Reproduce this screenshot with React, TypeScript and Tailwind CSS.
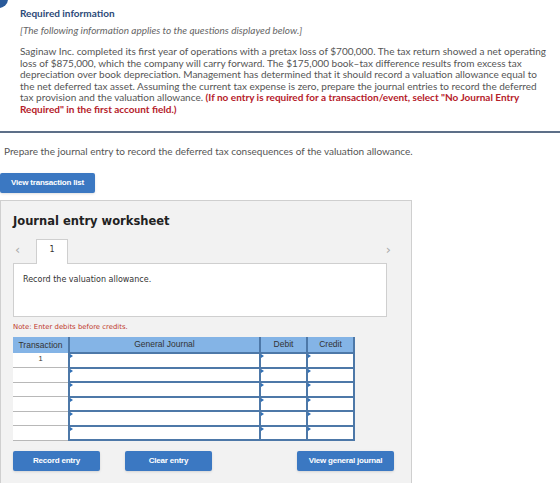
import React from "react";

const rows = [1, 2, 3, 4, 5, 6];

const Caret = () => (
  <span className="absolute left-0 top-0 h-0 w-0 border-y-[2.5px] border-l-[3px] border-y-transparent border-l-[#2f6fb5]" />
);

const BlueButton: React.FC<{ label: string; className?: string }> = ({ label, className }) => (
  <button
    type="button"
    className={`h-[20px] rounded-[2px] bg-[#3b78c2] text-[8px] font-bold tracking-[-0.2px] text-white shadow-sm ${className ?? ""}`}
    style={{ fontFamily: "'Liberation Sans', Arial, sans-serif" }}
  >
    {label}
  </button>
);

export default function App() {
  return (
    <div className="relative h-[483px] w-[560px] overflow-hidden bg-white" style={{ fontFamily: "Lato, 'Open Sans', sans-serif" }}>
      <div className="absolute -left-[10px] -top-[10px] h-[18px] w-[18px] rounded-full bg-[#2a5a9a]" />

      <section className="border-b-2 border-[#5d6f88] px-[20px] pb-[16px] pt-[7px]">
        <h2 className="text-[10px] font-bold leading-[12px] text-[#2c4a78]">Required information</h2>
        <p className="mt-[5px] text-[10px] italic leading-[12px] text-[#666]">
          [The following information applies to the questions displayed below.]
        </p>
        <p className="mt-[10px] whitespace-nowrap text-[10px] leading-[11.5px] text-[#555]">
          Saginaw Inc. completed its first year of operations with a pretax loss of $700,000. The tax return showed a net operating
          <br />
          loss of $875,000, which the company will carry forward. The $175,000 book–tax difference results from excess tax
          <br />
          depreciation over book depreciation. Management has determined that it should record a valuation allowance equal to
          <br />
          the net deferred tax asset. Assuming the current tax expense is zero, prepare the journal entries to record the deferred
          <br />
          tax provision and the valuation allowance.{" "}
          <span className="font-bold text-[#b5202a]">
            (If no entry is required for a transaction/event, select "No Journal Entry
            <br />
            Required" in the first account field.)
          </span>
        </p>
      </section>

      <p className="mt-[12px] pl-[4px] text-[10px] leading-[12px] text-[#555]">
        Prepare the journal entry to record the deferred tax consequences of the valuation allowance.
      </p>

      <BlueButton label="View transaction list" className="mt-[16px] w-[95px]" />

      <div
        className="mt-[7px] w-[412px] border border-[#cfcfcf] bg-[#f2f2f2] pb-[20px]"
        style={{ fontFamily: "'DejaVu Sans', Verdana, sans-serif" }}
      >
        <h3 className="ml-[12px] mt-[12px] text-[11.5px] font-bold leading-[16px] text-[#222]">Journal entry worksheet</h3>

        <div className="relative ml-[12px] mr-[24px] mt-[9px]">
          <div className="flex h-[25px] items-end">
            <span className="mb-[7px] ml-[2px] w-[21px] text-[13px] leading-none text-[#aaa]">‹</span>
            <div className="relative z-10 -mb-px flex h-[25px] w-[32px] justify-center border border-b-0 border-[#cfcfcf] bg-white pt-[4px] text-[8px] text-[#333]">
              1
            </div>
            <span className="mb-[7px] ml-auto mr-[-4px] text-[13px] leading-none text-[#aaa]">›</span>
          </div>
          <div className="h-[54px] border border-[#cfcfcf] bg-white px-[9px] pt-[10px] text-[8px] text-[#333]">
            Record the valuation allowance.
          </div>
        </div>

        <p className="ml-[12px] mt-[5px] text-[6.9px] text-[#c0392b]">Note: Enter debits before credits.</p>

        <table
          className="ml-[12px] mt-[5px] border-collapse text-[8.5px] text-[#333]"
          style={{ fontFamily: "'Liberation Sans', Arial, sans-serif" }}
        >
          <thead>
            <tr className="h-[16px] bg-[#84b4e6]">
              <th className="w-[56px] border-r-2 border-[#4d78a8] font-normal">Transaction</th>
              <th className="w-[191px] border-r-2 border-[#4d78a8] font-normal">General Journal</th>
              <th className="w-[47px] border-r-2 border-[#4d78a8] font-normal">Debit</th>
              <th className="w-[47px] border-r-2 border-[#4d78a8] font-normal">Credit</th>
            </tr>
          </thead>
          <tbody>
            {rows.map((r) => (
              <tr key={r} className="h-[14.5px]">
                <td className="border-b border-[#b8b8b8] bg-white text-center align-top text-[7.5px] leading-[12px]">
                  {r === 1 ? "1" : ""}
                </td>
                <td className="relative border-2 border-[#4d78a8] bg-white">
                  <Caret />
                </td>
                <td className="relative border-2 border-[#4d78a8] bg-white">
                  <Caret />
                </td>
                <td className="relative border-2 border-[#4d78a8] bg-white">
                  <Caret />
                </td>
              </tr>
            ))}
          </tbody>
        </table>

        <div className="ml-[12px] mt-[10px] flex w-[381px]">
          <BlueButton label="Record entry" className="w-[87px]" />
          <BlueButton label="Clear entry" className="ml-[25px] w-[87px]" />
          <BlueButton label="View general journal" className="ml-auto w-[97px]" />
        </div>
      </div>
    </div>
  );
}
